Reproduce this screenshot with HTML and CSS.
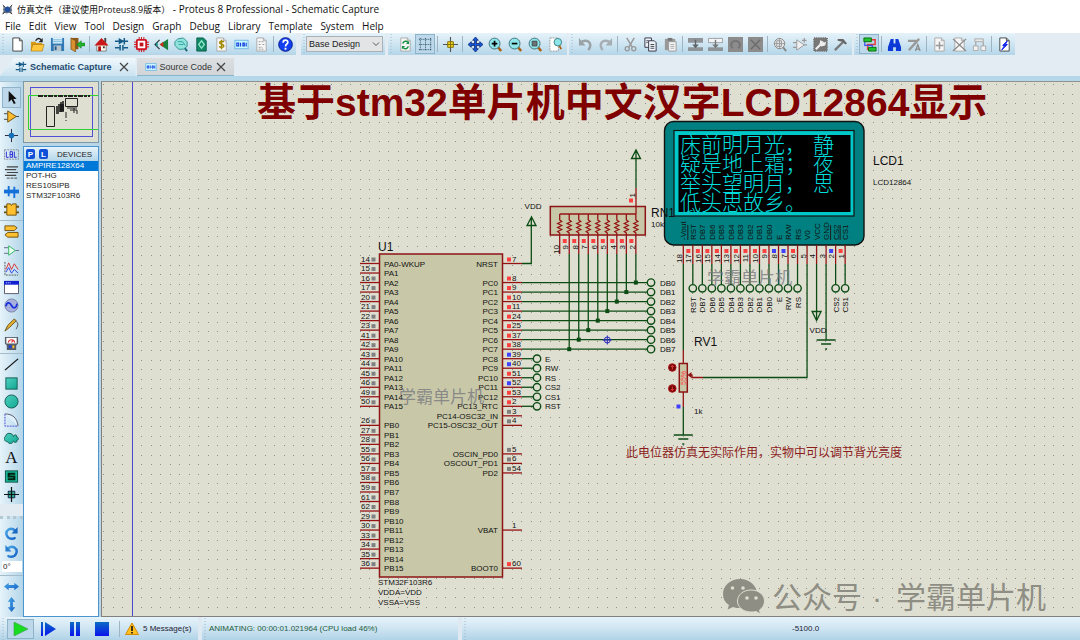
FILE: index.html
```html
<!DOCTYPE html>
<html lang="zh-CN">
<head>
<meta charset="utf-8">
<title>仿真文件 - Proteus 8 Professional - Schematic Capture</title>
<link rel="stylesheet" href="styles.css">
</head>
<body>
<svg class="defs" aria-hidden="true">
  <defs>
    <linearGradient id="gTeal" x1="0" y1="0" x2="1" y2="1"><stop offset="0" stop-color="#4fd0c0"/><stop offset="1" stop-color="#10a890"/></linearGradient>
    <linearGradient id="gBlue" x1="0" y1="0" x2="0" y2="1"><stop offset="0" stop-color="#0a6cc4"/><stop offset="1" stop-color="#0a14ee"/></linearGradient>
    <linearGradient id="gSky" x1="0" y1="0" x2="1" y2="1"><stop offset="0" stop-color="#4aa8e4"/><stop offset="1" stop-color="#1360c8"/></linearGradient>
    <symbol id="page" viewBox="0 0 16 16"><path d="M3 1h7l3 3v11H3z" fill="#fff" stroke="#444"/><path d="M10 1v3h3" fill="none" stroke="#444"/></symbol>
    <symbol id="pageGray" viewBox="0 0 16 16"><path d="M3 1h7l3 3v11H3z" fill="#f6f6f6" stroke="#aaa"/><path d="M10 1v3h3" fill="none" stroke="#aaa"/></symbol>
    <symbol id="lens" viewBox="0 0 16 16"><path d="M10 10l4 5" stroke="#a86010" stroke-width="2.6"/><circle cx="7" cy="7" r="5.8" fill="#8fe6ea" stroke="#3b6f78"/></symbol>
    <symbol id="schem" viewBox="0 0 16 16"><path d="M1 4.500h14M1 11.500h5M10 11.500h5" stroke="#155a86" stroke-width="1.500"/><path d="M5 1l6 3.500L5 8z" fill="#155a86"/><path d="M11 1v7M6.500 8.500v6M9.500 8.500v6" stroke="#155a86" stroke-width="1.600"/></symbol>
    <symbol id="code" viewBox="0 0 16 16"><rect x="1" y="3.500" width="14" height="9" fill="#c9f8ff" stroke="#6fb6e0"/><path d="M3 6.500h2v3H3zM7 6v4M9.500 6.500h1.500v3H9.500zM13 6v4" fill="none" stroke="#1540e0" stroke-width="1.200"/></symbol>
    <symbol id="cross" viewBox="0 0 10 10"><path d="M1 1l8 8M9 1L1 9" stroke="#444" stroke-width="1.200"/></symbol>
  </defs>
</svg>

<header class="titlebar">
  <svg class="logo" viewBox="0 0 14 14"><path d="M1 2l4 2 2-1 3 1 3-3-1 4 1 3-1 2 1 3-4-2-3 1-3-1-3 2 2-4-1-2 1-2z" fill="#6c7684"/><circle cx="7" cy="7" r="3.500" fill="#234fa0"/><path d="M1 1l3 3M13 1l-3 3M1 13l3-3M13 13l-3-3" stroke="#333"/></svg>
  <span><span class="file">仿真文件（建议使用Proteus8.9版本）</span> - Proteus 8 Professional - Schematic Capture</span>
</header>

<nav class="menubar">
  <button>File</button><button>Edit</button><button>View</button><button>Tool</button><button>Design</button><button>Graph</button><button>Debug</button><button>Library</button><button>Template</button><button>System</button><button>Help</button>
</nav>

<div class="toolbars">
  <div class="band tight">
    <button aria-label="New"><svg viewBox="0 0 16 16"><use href="#page"/></svg></button>
    <button aria-label="Open"><svg viewBox="0 0 16 16"><path d="M1 5h5l1 1.500h6V15H1z" fill="#d89a18"/><path d="M1 15l2-7h12l-2 7z" fill="#ffc83c" stroke="#a06c08" stroke-width=".6"/><path d="M6 4c2-3 4-3 6-1" fill="none" stroke="#222" stroke-width="1.400"/><path d="M13.500 1v4.500H9z" fill="#222"/></svg></button>
    <button aria-label="Save"><svg viewBox="0 0 16 16"><path d="M1 1h14v14H1z" fill="#2f78b4"/><path d="M3 1h10v6H3z" fill="#dff0fa"/><path d="M4 9h8v6H4z" fill="#b8c4cc"/><path d="M5 10h2v4H5z" fill="#245a8c"/><path d="M3 3h10M3 5h10" stroke="#6fb4dc"/></svg></button>
    <button aria-label="Close project"><svg viewBox="0 0 16 16"><path d="M1 1h8v12H1z" fill="#8a5a1c"/><path d="M1 1l5 3v12l-5-3z" fill="#d89030" stroke="#60400c" stroke-width=".6"/><path d="M7 8l5-4v2.500h4v3h-4V12z" fill="#22b42c" stroke="#0a7012" stroke-width=".5"/></svg></button>
    <i class="sep"></i>
    <button aria-label="Home"><svg viewBox="0 0 16 16"><path d="M11 1h2v5h-2z" fill="#444"/><path d="M3 8h10v7H3z" fill="#fff8ee" stroke="#555" stroke-width=".7"/><path d="M8 1l7.500 8H.5z" fill="#c81818"/><path d="M4.500 10h3v5h-3z" fill="#b01010"/><path d="M9.500 10h2v2h-2z" fill="#333"/></svg></button>
    <button aria-label="Schematic Capture"><svg viewBox="0 0 16 16"><use href="#schem"/></svg></button>
    <button aria-label="PCB Layout"><svg viewBox="0 0 16 16"><path d="M5.500 0v16M8 0v16M10.500 0v16M0 5.500h16M0 8h16M0 10.500h16" stroke="#c81420"/><rect x="3" y="3" width="10" height="10" rx="1" fill="#fff" stroke="#d01422" stroke-width="2"/><path d="M6 6h4v4H6z" fill="#c01420"/></svg></button>
    <button aria-label="3D Visualizer"><svg viewBox="0 0 16 16"><path d="M15 2v12L6 8z" fill="#17803c"/><path d="M6 8l4-3v6z" fill="#c83018"/><path d="M6 3L1 8l5 5" fill="none" stroke="#333" stroke-width="1.200"/><path d="M3 6v4" stroke="#1a9090" stroke-width="2"/></svg></button>
    <button aria-label="Gerber Viewer"><svg viewBox="0 0 16 16"><path d="M10 10l4 5" stroke="#176a70" stroke-width="2"/><path d="M4 2l6-1 4 4v5l-4 3H5L1 9V5z" fill="#90e4dc" stroke="#309090"/><path d="M4 5h5l3 4M5 8h5" fill="none" stroke="#30a0a0"/></svg></button>
    <button aria-label="Design Explorer"><svg viewBox="0 0 16 16"><path d="M3 1h7l3 3v11H3z" fill="#118a68" stroke="#0a5c46"/><path d="M8 4l3 4-3 4-3-4z" fill="none" stroke="#8fe8c8" stroke-width="1.400"/></svg></button>
    <button aria-label="Bill of Materials"><svg viewBox="0 0 16 16"><use href="#pageGray"/><path d="M10.500 5.500c-1-1.500-4.500-1-4.500.7 0 2 4.500 1.200 4.500 3.300 0 2-4 2-5 .5M8 3v10" fill="none" stroke="#a08a00" stroke-width="1.600"/></svg></button>
    <button aria-label="Source Code"><svg viewBox="0 0 16 16"><use href="#code"/></svg></button>
    <button aria-label="Project Notes"><svg viewBox="0 0 16 16"><use href="#pageGray"/><path d="M5 5h5M5 8h2M9 8h2M5 11h4M5 13h6" stroke="#999" stroke-dasharray="2 1"/></svg></button>
    <i class="sep"></i>
    <button aria-label="Help"><svg viewBox="0 0 16 16"><circle cx="8" cy="8" r="7.300" fill="#1240f0" stroke="#0a1c90"/><path d="M5.500 6c0-3.500 5-3.300 5-.4C10.500 7.500 8 7.500 8 10" fill="none" stroke="#fff" stroke-width="1.800"/><path d="M7 11.500h2v2H7z" fill="#fff"/></svg></button>
  </div>
  <div class="band design">
    <select aria-label="Design variant"><option>Base Design</option></select>
    <svg class="chev" viewBox="0 0 8 8"><path d="M1 2.500l3 3 3-3" fill="none" stroke="#555"/></svg>
  </div>
  <div class="band">
    <button aria-label="Redraw"><svg viewBox="0 0 16 16"><use href="#pageGray"/><path d="M5 7c1-3 4-3 5.500-1.500M11 10c-1 3-4 3-5.500 1.500" fill="none" stroke="#149040" stroke-width="1.600"/><path d="M11.800 4v3.500H8.500zM4.200 13V9.500h3.300z" fill="#149040"/></svg></button>
    <button class="on" aria-label="Toggle grid"><svg viewBox="0 0 16 16"><path d="M1 2.500h14M1 8h14M1 13.500h14M2.500 1v14M8 1v14M13.500 1v14" stroke="#2c4c64" stroke-dasharray="1 1"/></svg></button>
    <i class="sep"></i>
    <button aria-label="Origin"><svg viewBox="0 0 16 16"><path d="M8 0v16M0 8h16" stroke="#555" stroke-width="1.200"/><path d="M5 5h6v6H5z" fill="#f4d820" stroke="#806c00"/><path d="M8 5v6M5 8h6" stroke="#806c00"/></svg></button>
    <i class="sep"></i>
    <button aria-label="Pan"><svg viewBox="0 0 16 16"><path d="M8 0l3 3.500H9v3.500h3.500V5L16 8l-3.500 3V9H9v3.500h2L8 16l-3-3.500h2V9H3.500v2L0 8l3.500-3v2H7V3.500H5z" fill="#1458e0" stroke="#0c2060" stroke-width=".8"/></svg></button>
    <button aria-label="Zoom in"><svg viewBox="0 0 16 16"><use href="#lens"/><path d="M7 4v6M4 7h6" stroke="#000" stroke-width="1.800"/></svg></button>
    <button aria-label="Zoom out"><svg viewBox="0 0 16 16"><use href="#lens"/><path d="M4 7h6" stroke="#000" stroke-width="1.800"/></svg></button>
    <button aria-label="Zoom all"><svg viewBox="0 0 16 16"><use href="#lens"/><path d="M4.500 4.500h5v5h-5z" fill="#6a7478" stroke="#444"/></svg></button>
    <button aria-label="Zoom area"><svg viewBox="0 0 16 16"><path d="M2 1h9v14H2z" fill="#fff" stroke="#999" stroke-dasharray="2 1"/><path d="M12 9l2 4" stroke="#a86010" stroke-width="2"/><circle cx="10.500" cy="5.500" r="4" fill="#8fe6ea" stroke="#3b7f88"/></svg></button>
  </div>
  <div class="band edit">
    <button aria-label="Undo"><svg viewBox="0 0 16 16"><path d="M4 5c7-3 12 2 7 9" fill="none" stroke="#9aa2a8" stroke-width="2.600"/><path d="M1 1v8h7z" fill="#9aa2a8"/></svg></button>
    <button aria-label="Redo"><svg viewBox="0 0 16 16"><path d="M12 5C5 2 0 7 5 14" fill="none" stroke="#a6aeb4" stroke-width="2.600"/><path d="M15 1v8H8z" fill="#a6aeb4"/></svg></button>
    <i class="sep"></i>
    <button aria-label="Cut"><svg viewBox="0 0 16 16"><path d="M4 1l6 10M12 1L6 11" stroke="#999" stroke-width="1.600"/><circle cx="4.500" cy="12.500" r="2.200" fill="none" stroke="#999" stroke-width="1.400"/><circle cx="11.500" cy="12.500" r="2.200" fill="none" stroke="#999" stroke-width="1.400"/></svg></button>
    <button aria-label="Copy"><svg viewBox="0 0 16 16"><path d="M2 1h7v10H2z" fill="#eef4f8" stroke="#334"/><path d="M6 4h6l2 2v9H6z" fill="#eef4f8" stroke="#334"/><path d="M8 8h4M8 10h4M8 12h4M3.500 4H6M3.500 6H5" stroke="#445"/></svg></button>
    <button aria-label="Paste"><svg viewBox="0 0 16 16"><path d="M2 2h11v12H2z" fill="#999"/><path d="M5 1h5v3H5z" fill="#777"/><path d="M6 5h8v10H6z" fill="#f4f4f4" stroke="#999"/><path d="M8 8h4M8 10h4M8 12h4" stroke="#aaa"/></svg></button>
    <i class="sep"></i>
    <button aria-label="Block copy"><svg viewBox="0 0 16 16"><path d="M0 1h16v5H0zM0 11h16v4H0z" fill="#8e9498"/><path d="M8 3v7" stroke="#5e6468" stroke-width="1.500"/><path d="M4.500 8h7L8 12z" fill="#5e6468"/></svg></button>
    <button aria-label="Block move"><svg viewBox="0 0 16 16"><path d="M.5 1.500h15V6H.5z" fill="#f2f4f6" stroke="#9a9ea2"/><path d="M0 11h16v4H0z" fill="#8e9498"/><path d="M8 3v7" stroke="#777" stroke-width="1.500"/><path d="M4.500 8h7L8 12z" fill="#777"/></svg></button>
    <button aria-label="Block rotate"><svg viewBox="0 0 16 16"><path d="M0 0h16v16H0z" fill="#8c8c8c"/><path d="M5 12c-4-4 0-8 3-8s7 4 3 8" fill="none" stroke="#747474" stroke-width="2"/></svg></button>
    <button aria-label="Block delete"><svg viewBox="0 0 16 16"><path d="M0 0h16v16H0z" fill="#8c8c8c"/><path d="M3 3l10 10M13 3L3 13" stroke="#6c6c6c" stroke-width="1.600"/></svg></button>
    <i class="sep"></i>
    <button aria-label="Pick parts"><svg viewBox="0 0 16 16"><path d="M10 10l4 5" stroke="#888" stroke-width="2"/><circle cx="7" cy="7" r="5.500" fill="#e4e8ea" stroke="#888"/><path d="M1 7h12M7 1v12M4 4h5v6H4z" fill="none" stroke="#999"/></svg></button>
    <button aria-label="Make device"><svg viewBox="0 0 16 16"><path d="M0 6h4M0 11h4M12 8.500h3M12 1v5M9.500 3.500h5" stroke="#999" stroke-width="1.300"/><path d="M4 3l8 5.500L4 14z" fill="#f0f0f0" stroke="#999"/></svg></button>
    <button aria-label="Packaging tool"><svg viewBox="0 0 16 16"><rect x="1" y="1" width="14" height="14" fill="#777" stroke="#777" stroke-width="2" stroke-dasharray="1 1"/><path d="M3 13L11 5" stroke="#eee" stroke-width="2.400"/><path d="M8 3l3 3 3-1-1 4-4 1-2-3z" fill="#eee"/></svg></button>
    <button aria-label="Decompose"><svg viewBox="0 0 16 16"><path d="M2 14L11 5" stroke="#777" stroke-width="2.400"/><path d="M5 2h6l4 5-2 1-3-3-5-1z" fill="#666"/></svg></button>
  </div>
  <div class="band last">
    <button class="on" aria-label="Wire autorouter"><svg viewBox="0 0 16 16"><path d="M10 3h4v5H6v5h2" fill="none" stroke="#e43c3c" stroke-width="1.600"/><path d="M7 4H3v5h8v3" fill="none" stroke="#3c50e8" stroke-width="1.300"/><path d="M2 1h8v4H2zM7 11h8v4H7z" fill="#22c42c" stroke="#0a6c10"/></svg></button>
    <i class="sep"></i>
    <button aria-label="Search and tag"><svg viewBox="0 0 16 16"><path d="M4 2h3v5h2V2h3l3 9v4H9.500v-4h-3v4H1v-4z" fill="#0c38d8"/></svg></button>
    <button aria-label="Property assignment"><svg viewBox="0 0 16 16"><path d="M2 14L13 2M1 4h9" stroke="#999" stroke-width="2.400"/><path d="M9 15l2.500-7 2.500 7M10 13h3" fill="none" stroke="#888" stroke-width="1.300"/></svg></button>
    <i class="sep"></i>
    <button aria-label="New sheet"><svg viewBox="0 0 16 16"><use href="#pageGray"/><path d="M8 5v8M4 9h8" stroke="#999" stroke-width="1.600"/></svg></button>
    <button aria-label="Remove sheet"><svg viewBox="0 0 16 16"><use href="#pageGray"/><path d="M1 2l14 13M15 2L1 15" stroke="#888" stroke-width="1.300"/></svg></button>
    <button aria-label="Sheet hierarchy"><svg viewBox="0 0 16 16"><path d="M3 2h9v3H3z" fill="#e8e8e8" stroke="#aaa"/><path d="M4 5v5M12 5v5" stroke="#aaa" stroke-width="1.400"/><path d="M1.500 9.500h5v5h-5zM9.500 9.500h5v5h-5z" fill="#f2f2f2" stroke="#aaa"/></svg></button>
    <i class="sep"></i>
    <button aria-label="Electrical rules check"><svg viewBox="0 0 16 16"><use href="#page"/><path d="M11 4L6 9h2l-3 5 6-6H9z" fill="#1428e8" stroke="#1428e8"/></svg></button>
  </div>
</div>

<div class="tabs">
  <div class="tab active"><svg class="ti" viewBox="0 0 16 16"><use href="#schem"/></svg><a href="#schematic">Schematic Capture</a><button aria-label="Close tab"><svg viewBox="0 0 10 10"><use href="#cross"/></svg></button></div>
  <div class="tab"><svg class="ti" viewBox="0 0 16 16"><use href="#code"/></svg><a href="#source">Source Code</a><button aria-label="Close tab"><svg viewBox="0 0 10 10"><use href="#cross"/></svg></button></div>
</div>

<main class="work">
  <aside class="rail">
    <div class="group modes">
      <button class="on" aria-label="Selection"><svg viewBox="0 0 16 16"><path d="M5 1v12l3-3 2.500 5 2-1L10 9.500h3.500z" fill="#111"/></svg></button>
      <button aria-label="Component"><svg viewBox="0 0 16 16"><path d="M0 5h4M0 11h4M12 8h4" stroke="#444"/><path d="M4 2l9 6-9 6z" fill="#ffbc2c" stroke="#6c5010"/></svg></button>
      <button aria-label="Junction"><svg viewBox="0 0 16 16"><path d="M8 1v14M1 8h14" stroke="#223"/><circle cx="8" cy="8" r="3" fill="#1670b8"/></svg></button>
      <button aria-label="Wire label"><svg viewBox="0 0 16 16"><rect x=".5" y="3" width="15" height="10" fill="none" stroke="#889" stroke-dasharray="2 1"/><path d="M2.500 5v6h2.500M6.500 5v6h2.500V5H6.500M6.500 8H9M11 5v6h2.500" fill="none" stroke="#2828d0"/></svg></button>
      <button aria-label="Text script"><svg viewBox="0 0 16 16"><path d="M3 2h12M1 5h12M3 8h12M1 11h12" stroke="#444" stroke-width="1.300"/><path d="M3 14h12" stroke="#444" stroke-dasharray="3 1"/></svg></button>
      <button aria-label="Bus"><svg viewBox="0 0 16 16"><path d="M0 8h16" stroke="#1470d8" stroke-width="4"/><path d="M5 2v11M11 3v12" stroke="#1470d8" stroke-width="2"/></svg></button>
      <button aria-label="Subcircuit"><svg viewBox="0 0 16 16"><path d="M0 5h16M0 11h16" stroke="#6c5010" stroke-width="2"/><path d="M3 2h4c0 2 2 2 2 0h4v12H3z" fill="#ffc030" stroke="#6c5010"/></svg></button>
      <i class="hsep"></i>
      <button aria-label="Terminal"><svg viewBox="0 0 16 16"><path d="M1 2h10l3 2-3 3H1zM15 9H4L1 11.500 4 14h11z" fill="#ffc030" stroke="#6c5010"/></svg></button>
      <button aria-label="Device pin"><svg viewBox="0 0 16 16"><path d="M0 5h5M0 11h5M12 8h4" stroke="#668"/><path d="M5 3l7 5-7 5z" fill="#eafff0" stroke="#30b860"/></svg></button>
      <button aria-label="Graph"><svg viewBox="0 0 16 16"><path d="M1 1v14h14" fill="none" stroke="#555" stroke-dasharray="2 1"/><path d="M2 9l3-7 3 7 3-6 4 6" fill="none" stroke="#d83030"/><path d="M2 12l3-5 3 6 3-4 4 4" fill="none" stroke="#3040e0"/></svg></button>
      <button aria-label="Active popup"><svg viewBox="0 0 16 16"><path d="M.5 1.500h15v13H.5z" fill="#fff" stroke="#556"/><path d="M0 1h16v4H0z" fill="#1020d0"/><path d="M2 3h5" stroke="#fff" stroke-dasharray="1 1"/></svg></button>
      <button aria-label="Generator"><svg viewBox="0 0 16 16"><circle cx="8" cy="8" r="7" fill="#a8b0dc" stroke="#7c84a8"/><path d="M2 9c1-5 4-5 6-1s5 3 6-2" fill="none" stroke="#1830e0" stroke-width="1.800"/></svg></button>
      <button aria-label="Probe"><svg viewBox="0 0 16 16"><path d="M1 15l3-6 7-7 2 2-7 7z" fill="#e8b030" stroke="#6c5010"/><path d="M12 4c5 3 2 6 1 9" fill="none" stroke="#555"/></svg></button>
      <button aria-label="Instruments"><svg viewBox="0 0 16 16"><path d="M1 1h14v7l-2 2v5H3v-5L1 8z" fill="#555c66"/><path d="M2.500 2h11v6h-11z" fill="#fff"/><path d="M4.500 7c1-4 6-4 7 0M8 7l2-3" fill="none" stroke="#d83030" stroke-width="1.200"/><path d="M5 10h3v3H5z" fill="#2040e0"/><path d="M9 10h2v3H9z" fill="#ffc030"/></svg></button>
      <i class="hsep"></i>
      <button aria-label="Line"><svg viewBox="0 0 16 16"><path d="M1 14L15 2" stroke="#111" stroke-width="1.400"/></svg></button>
      <button aria-label="Box"><svg viewBox="0 0 16 16"><rect x="2" y="2" width="12" height="12" fill="url(#gTeal)" stroke="#175c54"/></svg></button>
      <button aria-label="Circle"><svg viewBox="0 0 16 16"><circle cx="8" cy="8" r="7" fill="url(#gTeal)" stroke="#175c54"/></svg></button>
      <button aria-label="Arc"><svg viewBox="0 0 16 16"><path d="M1 1v13h14" fill="none" stroke="#4848e0" stroke-dasharray="2 1"/><path d="M1 1c8 0 13 4 14 13" fill="#dff0fa" stroke="#556"/></svg></button>
      <button aria-label="Path"><svg viewBox="0 0 16 16"><path d="M5.500 2.500c3 0 4.500 2 4.500 3.500 1-3 4.500-2 3.500.5 2.500 0 2.500 3.500 0 3.500 1 2.500-2.500 3-3.500.500 0 3-5 4-6 1-4.500 0-4.500-5.500-2-6 0-2 1.500-3 3.500-3z" fill="url(#gTeal)" stroke="#175c54"/></svg></button>
      <button class="serif" aria-label="Text">A</button>
      <button aria-label="Symbol"><svg viewBox="0 0 16 16"><rect x="1.500" y="2" width="13" height="12" fill="#18b898" stroke="#0c5044"/><path d="M12 5H5v3h6v3H4" fill="none" stroke="#021" stroke-width="2.200"/></svg></button>
      <button aria-label="Marker"><svg viewBox="0 0 16 16"><path d="M4.500 4.500h7v7h-7z" fill="#30a890" stroke="#124"/><path d="M8 0v16M0 8h16" stroke="#111" stroke-width="1.300"/></svg></button>
    </div>
    <div class="group turn">
      <button aria-label="Rotate clockwise"><svg viewBox="0 0 16 16"><path d="M12 5C7 0 1 5 3 10s8 4 9 2" fill="none" stroke="url(#gSky)" stroke-width="2.600"/><path d="M14.500 1v7H8z" fill="#1a68c0"/></svg></button>
      <button aria-label="Rotate anticlockwise"><svg viewBox="0 0 16 16"><path d="M4 5c5-5 11 0 9 5s-8 4-9 2" fill="none" stroke="url(#gSky)" stroke-width="2.600"/><path d="M1.500 1v7H8z" fill="#2a80d0"/></svg></button>
      <input aria-label="Rotation angle" value="0°">
      <i class="hsep"></i>
      <button aria-label="Mirror horizontally"><svg viewBox="0 0 16 16"><path d="M0 8l5-4v2.500h6V4l5 4-5 4V9.500H5V12z" fill="url(#gSky)"/></svg></button>
      <button aria-label="Mirror vertically"><svg viewBox="0 0 16 16"><path d="M8 0l4 5H9.500v6H12l-4 5-4-5h2.500V5H4z" fill="url(#gSky)"/></svg></button>
    </div>
  </aside>

  <aside class="side">
    <div class="overview">
      <svg viewBox="-1 1 74 61" preserveAspectRatio="xMinYMin meet">
        <rect x="5.500" y="6.500" width="62" height="49" fill="none" stroke="#5050d8"/>
        <path d="M73.500 14.500h-70v34h70" fill="none" stroke="#30d030"/>
        <path d="M13 15h52" stroke="#222" stroke-width="2" stroke-dasharray="5 1 3 1"/>
        <path d="M21.500 25.500h8v20h-8zM40.500 17.500h12v8h-12z" fill="none" stroke="#222"/>
        <path d="M31 26h8M31 28h8M31 30h8M33 24h6M36 21v10M38 20v10M31 32h3" stroke="#111" stroke-width="1.500"/>
        <path d="M42 27h10M45 29h7v4M41 31v6M41 39v1M49 27v5" fill="none" stroke="#222"/>
      </svg>
    </div>
    <section class="devices">
      <h2><button>P</button><button>L</button><span>DEVICES</span></h2>
      <ul><li class="sel">AMPIRE128X64</li><li>POT-HG</li><li>RES10SIPB</li><li>STM32F103R6</li></ul>
    </section>
  </aside>

  <section class="canvas" id="schematic">
    <svg class="sheet" aria-label="Schematic">
      <defs><pattern id="dots" width="19" height="19" x="1" y="2" patternUnits="userSpaceOnUse"><path d="M0 0h1v1H0zM10 0h1v1h-1zM0 10h1v1H0zM10 10h1v1h-1z" fill="#90908a"/></pattern></defs>
      <rect width="100%" height="100%" fill="url(#dots)"/>
      <line x1="30.500" y1="0" x2="30.500" y2="100%" stroke="#4848d0"/>
      <g id="plan" transform="translate(-102 -82)"></g>
    </svg>
  </section>
</main>

<footer class="status">
  <div class="seg sim">
    <button class="play" aria-label="Run"><svg viewBox="0 0 16 14"><path d="M1 0l14 7-14 7z" fill="#18dc20" stroke="#3c9c50" stroke-width=".6"/></svg></button>
    <button aria-label="Step"><svg viewBox="0 0 16 14"><path d="M1 0h2v14H1zM5 0l11 7-11 7z" fill="url(#gBlue)"/></svg></button>
    <button aria-label="Pause"><svg viewBox="0 0 16 14"><path d="M3 0h4v14H3zM9 0h4v14H9z" fill="url(#gBlue)"/></svg></button>
    <button aria-label="Stop"><svg viewBox="0 0 16 14"><path d="M1 0h14v14H1z" fill="url(#gBlue)"/></svg></button>
    <i class="sep"></i>
    <svg class="warn" viewBox="0 0 14 13"><path d="M7 1l6.500 11.500H.5z" fill="#ffc020" stroke="#d88a00"/><path d="M7 4v5M7 10v1.500" stroke="#111" stroke-width="1.600"/></svg>
    <span>5 Message(s)</span>
  </div>
  <div class="seg anim">ANIMATING: 00:00:01.021964 (CPU load 46%)</div>
  <div class="seg coords">-5100.0</div>
</footer>
<script src="schematic.js"></script>
</body>
</html>
```
FILE: styles.css
```css
* { box-sizing: border-box; }
body { margin: 0; height: 100vh; display: flex; flex-direction: column; overflow: hidden; background: #fff; color: #222; font-family: "Liberation Sans", "Noto Sans CJK SC", sans-serif; font-size: 8px; }
button { margin: 0; padding: 0; border: 0; background: none; color: inherit; font: inherit; display: flex; align-items: center; justify-content: center; }
svg { display: block; }
.defs { position: absolute; width: 0; height: 0; }

.titlebar { display: flex; align-items: center; gap: 4px; height: 18px; padding-left: 2px; font-family: "Open Sans", "Noto Sans CJK SC", sans-serif; font-size: 10px; line-height: 18px; color: #111; white-space: pre; }
.titlebar .file { font-size: 9px; }
.logo { width: 11px; height: 11px; }
.menubar { display: flex; gap: 8px; height: 15px; padding-left: 5px; font-family: "Open Sans", sans-serif; font-size: 10px; line-height: 16px; color: #111; }

.toolbars { display: flex; height: 24px; padding-bottom: 2px; background: #e4ecf3; gap: 2px; }
.band { display: flex; align-items: center; height: 22px; padding: 0 2px 0 7px; background: radial-gradient(#9ab4c4 30%, transparent 40%) 2px 0 / 2px 3px repeat-y, linear-gradient(#e6f3fa, #cfe5f2 50%, #b4d6e9); }
.band.tight { padding-right: 1px; margin-right: 3px; }
.band.edit { padding-left: 6px; }
.band.last { padding-left: 5px; padding-right: 1px; }
.band button { width: 20px; height: 20px; }
.band button svg { width: 15px; height: 15px; }
.band button.on, .rail button.on, .play { background: #bcd8ea; border: 1px solid #8fb4ca; }
.sep { width: 5px; height: 16px; border-left: 2px solid transparent; border-right: 2px solid transparent; background: #9fb4c2; background-clip: padding-box; }
.tight .sep { width: 4px; border-right-width: 1px; }
.design { position: relative; padding-left: 5px; margin-right: 1px; }
.design select { width: 77px; height: 16px; padding: 0 2px; appearance: none; border: 1px solid #aab2b8; border-radius: 0; background: #e2e4e6; font-family: inherit; font-size: 9px; color: #222; }
.chev { position: absolute; right: 5px; top: 7px; width: 8px; height: 8px; }

.tabs { display: flex; align-items: flex-end; gap: 1px; height: 24px; background: #e4ecf3; border-bottom: 5px solid #b4d8ea; }
.tab { display: flex; align-items: center; height: 18px; padding: 0 8px; gap: 3px; background: linear-gradient(#dcdfe2, #d2d5d8); font-size: 9px; border-bottom: 1px solid #8ab6cc; flex: none; }
.tab.active { padding: 0 7px 0 15px; background: linear-gradient(#f0f8fc, #cce4f1); clip-path: polygon(14px 0, 100% 0, 100% 100%, 0 100%); font-weight: bold; border-bottom-color: #cce4f1; }
.tab a { color: #333; text-decoration: none; }
.tab.active a { color: #1d4a70; }
.tab button { margin-left: 1px; }
.tab.active button { margin-left: 4px; }
.tab button svg { width: 10px; height: 10px; }
.ti { width: 12px; height: 12px; }

.work { flex: 1; min-height: 0; display: flex; background: #b8d6e6; }
.rail { flex: none; width: 23px; display: flex; flex-direction: column; gap: 12px; background: #e2ebf2; }
.group { display: flex; flex-direction: column; background: linear-gradient(90deg, #e6f3fa, #b4d6e9); }
.modes { flex: 1; padding-top: 5px; border-top: 1px solid #a8c4d4; }
.modes button { flex: 1; min-height: 0; margin: 0 2px; }
.turn { padding: 5px 0 4px; border-top: 3px dotted #b4c8d4; }
.turn button { height: 18px; }
.rail svg { width: 15px; height: 15px; }
.rail input { height: 11px; margin: 1px 1px 1px 2px; padding: 0 1px; border: 0; background: #fff; font: inherit; color: #222; min-width: 0; width: 20px; }
.hsep { height: 1px; margin: 1px 0; background: #a4bcca; }
.turn .hsep { margin: 2px 0 1px; }
.serif { font-family: "Liberation Serif", serif; font-size: 17px; line-height: 17px; color: #111; }

.side { flex: none; width: 76px; display: flex; flex-direction: column; gap: 3px; }
.overview { height: 62px; border: 1px solid #7d98a6; background: #dfdfd1; overflow: hidden; }
.overview svg { width: 74px; height: 61px; }
.devices { flex: 1; min-height: 0; border: 1px solid #4c94d0; background: #fff; }
.devices h2 { margin: 0; height: 14px; padding: 0 2px; display: flex; align-items: center; gap: 4px; background: linear-gradient(#e6f3fa, #b4d6e9); font-size: 8px; font-weight: normal; }
.devices h2 button { width: 9px; height: 10px; border-radius: 2px; background: #1050d8; color: #fff; font-weight: bold; }
.devices h2 span { margin-left: 5px; }
.devices ul { margin: 0; padding: 0; list-style: none; }
.devices li { height: 10px; line-height: 10px; padding-left: 2px; }
.devices .sel { background: #0078d7; color: #fff; }

.canvas { flex: 1; min-width: 0; margin-left: 2px; border-left: 1px solid #808080; border-top: 1px solid #909090; border-bottom: 1px solid #808080; background: #dfdfd1; }
.sheet { width: 100%; height: 100%; }
.pin { stroke: #941414; fill: none; stroke-width: 1.3; }
.wire { stroke: #0c4c14; fill: none; stroke-width: 1.3; }
.part { fill: #c8c8a8; stroke: #8c1414; stroke-width: 1.5; }
.term { stroke: #0c4c14; fill: none; stroke-width: 1.4; }
.node { fill: #0c4c14; }
.t { font-size: 8px; fill: #111; }
.ref { font-size: 12px; fill: #111; }
.mid { text-anchor: middle; }
.end { text-anchor: end; }
.hi { fill: #ff4040; }
.lo { fill: #4040ff; }
.off { fill: #808080; }
.headline { font-size: 39px; font-weight: bold; fill: #800000; }
.note { font-size: 12px; fill: #8c1c1c; }
.lcd { font-size: 21px; fill: #00dcdc; font-family: "Noto Sans CJK SC", sans-serif; font-weight: 300; }
.mark { font-size: 17px; fill: #787880; fill-opacity: .8; }
.brand { font-size: 30px; fill: #8e8e84; }

.status { flex: none; height: 23px; display: flex; gap: 4px; background: #dfe9f1; }
.seg { display: flex; align-items: center; padding-left: 7px; background: radial-gradient(#9ab4c4 30%, transparent 40%) 2px 0 / 2px 3px repeat-y, linear-gradient(#e6f3fa, #cfe5f2 50%, #b0d3e7); color: #223; white-space: nowrap; line-height: 12px; }
.sim { width: 198px; }
.sim button { width: 27px; height: 20px; }
.sim button svg { width: 16px; height: 14px; }
.sim .sep { margin-left: 2px; }
.warn { width: 14px; height: 13px; margin: 0 4px 0 3px; }
.anim { width: 256px; color: #225c3c; }
.coords { flex: 1; padding-left: 330px; }
```
FILE: schematic.js
```js
const plan = document.getElementById('plan');
const NS = 'http://www.w3.org/2000/svg';
const PITCH = 9.52;
const row = r => 263.5 + PITCH * r;
const col = c => 683.3 + PITCH * c;

function add(tag, attrs, text) {
  const el = document.createElementNS(NS, tag);
  for (const k in attrs) el.setAttribute(k, attrs[k]);
  if (text !== undefined) el.textContent = text;
  plan.appendChild(el);
  return el;
}
const path = (cls, d) => add('path', { class: cls, d });
const text = (cls, x, y, s) => add('text', { class: cls, x, y }, s);
const vtext = (cls, x, y, s) => add('text', { class: cls, transform: `translate(${x} ${y}) rotate(-90)` }, s);
const level = (cls, x, y) => add('rect', { class: cls, x: x - 2, y: y - 2, width: 4, height: 4 });
const ring = (x, y) => add('circle', { class: 'term', cx: x, cy: y, r: 3.7 });
const ground = (x, y) => path('wire', `M${x - 9.5} ${y}h19M${x - 5} ${y + 4}h10M${x - 1} ${y + 9}h2`);

text('headline', 257, 116, '基于stm32单片机中文汉字LCD12864显示');

/* U1 */
add('rect', { class: 'part', x: 379.5, y: 254, width: 123, height: 323 });
text('ref', 378, 251, 'U1');
['STM32F103R6', 'VDDA=VDD', 'VSSA=VSS'].forEach((s, i) => text('t', 378, 585 + i * 10, s));

const left = [14, 15, 16, 17, 20, 21, 22, 23, 41, 42, 43, 44, 45, 46, 49, 50, null,
  26, 27, 28, 55, 56, 57, 58, 59, 61, 62, 29, 30, 33, 34, 35, 36];
left.forEach((n, r) => {
  if (n === null) return;
  const y = row(r);
  const name = r < 16 ? 'PA' + r + (r ? '' : '-WKUP') : 'PB' + (r - 17);
  path('pin', `M360 ${y}H379`);
  text('t', 361, y - 2, n);
  level('off', 373.5, y - 4);
  text('t', 384, y + 3, name);
});

const right = [
  [0, 'NRST', 7, 'hi'], [2, 'PC0', 8, 'hi'], [3, 'PC1', 9, 'hi'], [4, 'PC2', 10, 'hi'],
  [5, 'PC3', 11, 'hi'], [6, 'PC4', 24, 'hi'], [7, 'PC5', 25, 'hi'], [8, 'PC6', 37, 'hi'],
  [9, 'PC7', 38, 'hi'], [10, 'PC8', 39, 'lo'], [11, 'PC9', 40, 'lo'], [12, 'PC10', 51, 'hi'],
  [13, 'PC11', 52, 'lo'], [14, 'PC12', 53, 'hi'], [15, 'PC13_RTC', 2, 'hi'],
  [16, 'PC14-OSC32_IN', 3, 'off'], [17, 'PC15-OSC32_OUT', 4, 'off'], [20, 'OSCIN_PD0', 5, 'off'],
  [21, 'OSCOUT_PD1', 6, 'off'], [22, 'PD2', 54, 'off'], [28, 'VBAT', 1, ''], [32, 'BOOT0', 60, 'hi']
];
right.forEach(([r, name, n, state]) => {
  const y = row(r);
  path('pin', `M503 ${y}h19`);
  text('t end', 498, y + 3, name);
  text('t', 512, y - 2, n);
  if (state) level(state, 509, y - 4);
});

path('wire', `M522 ${row(0)}H531.300V217M527 225.500h9l-4.500 -8.500z`);
text('t mid', 533, 209, 'VDD');

['E', 'RW', 'RS', 'CS2', 'CS1', 'RST'].forEach((s, i) => {
  const y = row(10 + i);
  path('wire', `M522 ${y}H533`);
  ring(537, y);
  text('t', 545, y + 3, s);
});

/* RN1 */
add('rect', { class: 'part', x: 550.3, y: 206.5, width: 95, height: 28.5 });
path('pin', 'M559.700 214H636M636 188V214');
for (let i = 0; i < 9; i++) {
  const x = 559.7 + PITCH * i;
  path('pin', `M${x} 214v6l2 1.500-4 2 4 2-4 2 4 2-4 2 2 1.500V254`);
  vtext('t end', x - 1, 245, 10 - i);
  if (i) {
    const y = row(10 - i);
    level('hi', x - 4.5, 241);
    path('wire', `M${x} 254V${y}`);
    level('node', x, y);
  }
}
for (let i = 0; i < 8; i++) {
  const y = row(2 + i);
  path('wire', `M522 ${y}H647`);
  ring(651, y);
  text('t', 660, y + 3, 'DB' + i);
}
path('wire', 'M636 188V150M631.500 158.500h9l-4.500 -8.500z');
vtext('t end', 635, 193, '1');
level('hi', 631, 200.5);
add('circle', { cx: 607.3, cy: 340, r: 3, fill: 'none', stroke: '#2828c0' });
add('path', { d: 'M607.300 335.500v9M602.500 340h9', stroke: '#2828c0' });

/* LCD1 */
add('rect', { x: 664.5, y: 121.5, width: 199.5, height: 123.5, rx: 9, fill: '#008080', stroke: '#111', 'stroke-width': 1.4 });
add('rect', { x: 674, y: 130.5, width: 180, height: 85.5, fill: '#00c8c8', stroke: '#111', 'stroke-width': 1.2 });
add('rect', { x: 678.5, y: 135, width: 172, height: 77, fill: '#000' });
[['床前明月光，', '静'], ['疑是地上霜；', '夜'], ['举头望明月，', '思'], ['低头思故乡。', '']].forEach(([a, b], i) => {
  const y = 152 + Math.round(i * 19.4);
  text('lcd', 680, y, a);
  if (b) text('lcd', 813, y, b);
});
text('ref', 651, 217, 'RN1');
text('t', 651, 227, '10k');
text('ref', 873, 165, 'LCD1');
text('t', 873, 185, 'LCD12864');

const lcdPins = [['-Vout', ''], ['RST', 'hi'], ['DB7', 'hi'], ['DB6', 'hi'], ['DB5', 'hi'], ['DB4', 'hi'],
  ['DB3', 'hi'], ['DB2', 'hi'], ['DB1', 'hi'], ['DB0', 'hi'], ['E', 'lo'], ['R/W', 'lo'], ['RS', 'hi'],
  ['V0', ''], ['VCC', ''], ['GND', ''], ['CS2', 'lo'], ['CS1', 'hi']];
lcdPins.forEach(([name, state], i) => {
  const x = col(i);
  path('pin', `M${x} 245v19`);
  vtext('t', x + 3, 240, name);
  vtext('t end', x - 1.5, 254, 18 - i);
  if (/^(RST|CS)/.test(name)) add('path', { d: `M${x - 5} 240v-15`, stroke: '#1c1c1c' });
  if (state) {
    level(state, x - 4.5, 251);
    path('wire', `M${x} 264V284.500`);
    ring(x, 288.3);
    vtext('t end', x + 3, 297, name.replace('/', ''));
  }
});
path('wire', `M${col(0)} 264V350M${col(13)} 264V377.500H703M${col(14)} 264V320M${col(15)} 264V340`);
path('wire', `M${col(14) - 4.5} 311.500h9l-4.500 9z`);
text('t mid', 818, 333, 'VDD');
ground(col(15), 340);

/* RV1 */
path('pin', 'M683.300 350V407M703 377.500H692V375H689');
path('wire', 'M683.300 407V435');
ground(683.3, 435);
add('rect', { class: 'part', x: 679.3, y: 363.5, width: 8, height: 28.5 });
add('path', { d: 'M687.500 375l4-3v6z', fill: '#8c1414' });
add('text', { transform: 'translate(686 385) rotate(-90)', class: 'hi', 'font-size': 7 }, '55%');
[367.5, 388.5].forEach((y, i) => {
  add('circle', { cx: 672.3, cy: y, r: 3.8, fill: '#700808', stroke: '#b01818' });
  add('path', { d: i ? `M672.300 ${y - 2}v4m-1.500 -1.500l1.500 1.500 1.500 -1.500` : `M672.300 ${y + 2}v-4m-1.500 1.500l1.500 -1.500 1.500 1.500`, stroke: '#f04040', fill: 'none' });
});
level('lo', 678.5, 406.5);
text('ref', 694, 346, 'RV1');
text('t', 694, 414, '1k');
text('note', 626, 457, '此电位器仿真无实际作用，实物中可以调节背光亮度');

/* watermarks */
text('mark', 399, 403, '学霸单片机');
text('mark', 707, 284, '学霸单片机');
const chat = '#8e8e84', paper = '#dfdfd1';
add('path', { d: 'M740 579c-10 0-17 7-17 15 0 5 2 8.500 6 11l-1.500 4.500 5.500-2.500c2.500 1 4.500 1 7 1 10 0 17-6 17-14S750 579 740 579z', fill: chat });
add('path', { d: 'M751 590c-8 0-13.500 5-13.500 11s5.500 11 13.500 11c2 0 3.500 0 5-.5l4.500 2.500-1-4c3-2 5-5 5-9 0-6-5.500-11-13.500-11z', fill: chat, stroke: paper });
[[732.5, 588], [743, 588], [747, 598], [756, 598]].forEach(([cx, cy]) => add('circle', { cx, cy, r: 1.8, fill: paper }));
text('brand', 772, 608, '公众号');
text('brand mid', 877, 608, '·');
text('brand', 896, 608, '学霸单片机');
```
